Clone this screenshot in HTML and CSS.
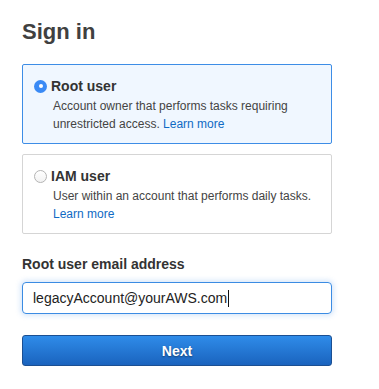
FILE: index.html
```html
<!DOCTYPE html>
<html>
<head>
<meta charset="utf-8">
<link rel="stylesheet" href="styles.css">
</head>
<body>
<div class="page">
  <h1 class="title">Sign in</h1>
  <div class="options">
    <div class="option selected">
      <div class="option-head"><span class="radio checked"></span><span class="option-title">Root user</span></div>
      <p class="option-desc">Account owner that performs tasks requiring unrestricted access. <a class="link">Learn more</a></p>
    </div>
    <div class="option">
      <div class="option-head"><span class="radio"></span><span class="option-title">IAM user</span></div>
      <p class="option-desc">User within an account that performs daily tasks. <a class="link">Learn more</a></p>
    </div>
  </div>
  <label class="field-label">Root user email address</label>
  <div class="input"><span class="input-text">legacyAccount@yourAWS.com</span><span class="caret"></span></div>
  <button class="btn">Next</button>
</div>
</body>
</html>
```
FILE: styles.css
```css
* { box-sizing: border-box; }
html, body { margin: 0; padding: 0; background: #fff; }
body { font-family: "Liberation Sans", Arial, Helvetica, sans-serif; color: #444; }
.page { width: 310px; margin-left: 22px; padding-top: 18px; display: flex; flex-direction: column; }
.title { margin: 0; font-size: 22px; line-height: 28px; font-weight: bold; color: #404040; }
.options { margin-top: 18px; display: flex; flex-direction: column; gap: 10px; }
.option { border: 1px solid #d5d5d5; border-radius: 2px; padding: 12px 10px 10px 11px; background: #fff; height: 80px; }
.option.selected { border-color: #3d8de6; background: #f0f7ff; }
.option-head { display: flex; align-items: center; gap: 4px; height: 18px; }
.option-title { font-size: 14px; line-height: 18px; font-weight: bold; color: #333; }
.radio { width: 13px; height: 13px; border-radius: 50%; border: 1px solid #b4b4b4; background: linear-gradient(#fff, #f2f2f2); flex: none; position: relative; }
.radio.checked { border: none; background: #3a8af5; }
.radio.checked::after { content: ""; position: absolute; left: 4.5px; top: 4.5px; width: 4px; height: 4px; border-radius: 50%; background: #fff; }
.option-desc { margin: 2px 0 0; padding-left: 19px; font-size: 12px; line-height: 18px; color: #444; }
.link { color: #0f6ac4; text-decoration: none; }
.field-label { margin-top: 21px; font-size: 14px; line-height: 18px; font-weight: bold; color: #333; }
.input { margin-top: 9px; height: 32px; border: 1px solid #3b8ce3; border-radius: 4px; box-shadow: 0 0 5px 2px rgba(80, 150, 230, 0.22); display: flex; align-items: center; padding-left: 10px; }
.input-text { font-size: 14px; color: #222; }
.caret { width: 1px; height: 17px; background: #111; margin-left: 1px; }
.btn { margin-top: 21px; height: 31px; border: 1px solid #1b4f92; border-radius: 3px; background: linear-gradient(#2f8ce9, #1a63be); color: #fff; font-family: "Liberation Sans", Arial, sans-serif; font-size: 14px; font-weight: bold; text-shadow: 0 1px 2px rgba(0, 0, 0, 0.45); padding: 0; }
```
